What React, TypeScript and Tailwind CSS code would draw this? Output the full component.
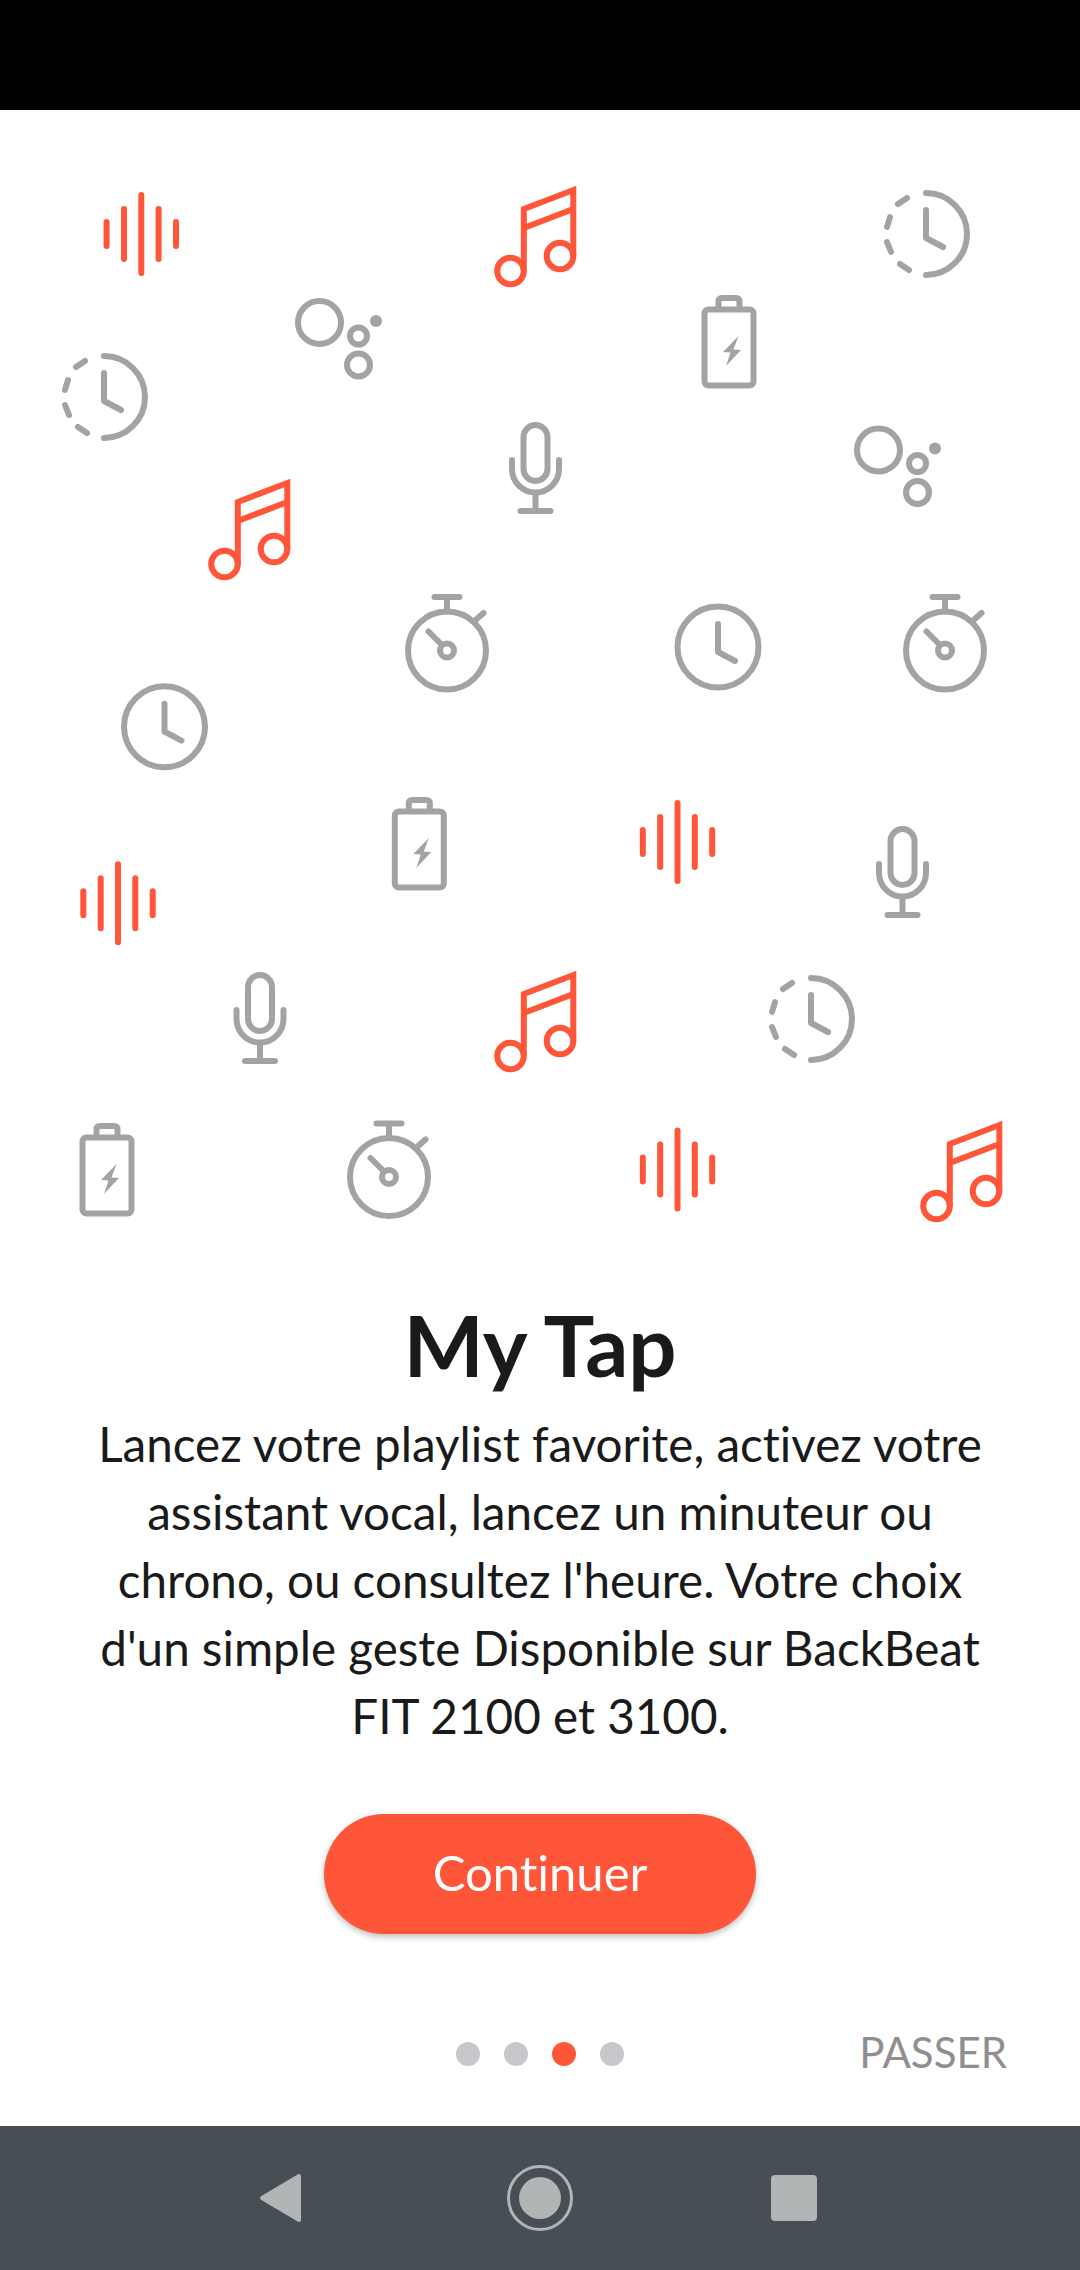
const RED = '#ff5639';
const GRAY = '#a3a3a3';

function Wave({ x, y }: { x: number; y: number }) {
  return (
    <g transform={`translate(${x} ${y})`} stroke={RED} strokeWidth={6} strokeLinecap="round" fill="none">
      <path d="M-34.7 -12V12M-17.3 -25V25M0 -39V39M17.3 -25V25M34.7 -12V12" />
    </g>
  );
}

function Music({ x, y }: { x: number; y: number }) {
  return (
    <g transform={`translate(${x} ${y})`} stroke={RED} strokeWidth={6} fill="none">
      <circle cx={16.5} cy={85} r={13.3} />
      <circle cx={66} cy={70} r={13.3} />
      <path d="M29.8 85V23L79.3 4V70" />
      <path d="M29.8 42L79.3 23" />
    </g>
  );
}

function DashClock({ x, y }: { x: number; y: number }) {
  return (
    <g transform={`translate(${x} ${y})`} stroke={GRAY} strokeWidth={6} strokeLinecap="round" strokeLinejoin="round" fill="none">
      <path d="M0 -41A41 41 0 0 1 0 41" />
      <path d="M-28 -30L-19 -36M-39 -7L-36 -17M-39 8L-35 18M-26 30L-17 36" />
      <path d="M0 -24V4L17 13" />
    </g>
  );
}

function Clock({ x, y }: { x: number; y: number }) {
  return (
    <g transform={`translate(${x} ${y})`} stroke={GRAY} strokeWidth={6} strokeLinecap="round" strokeLinejoin="round" fill="none">
      <circle r={40.5} />
      <path d="M0 -23V5L17 14" />
    </g>
  );
}

function Assistant({ x, y }: { x: number; y: number }) {
  return (
    <g transform={`translate(${x} ${y})`} stroke={GRAY} strokeWidth={6} fill="none">
      <circle r={21.5} />
      <circle cx={39} cy={13.5} r={8.5} />
      <circle cx={39} cy={42.5} r={11.5} />
      <circle cx={56.5} cy={-1.5} r={6} fill={GRAY} stroke="none" />
    </g>
  );
}

function Battery({ x, y }: { x: number; y: number }) {
  return (
    <g transform={`translate(${x} ${y})`}>
      <g stroke={GRAY} strokeWidth={6} fill="none" strokeLinejoin="round">
        <rect x={-24.5} y={14.5} width={49} height={76} rx={4} />
        <path d="M-10.5 14V6.5Q-10.5 3 -7 3H7Q10.5 3 10.5 6.5V14" />
      </g>
      <path d="M9.5 41L-6 57L1.5 57.5L-3 71L12 55L4.5 54.5Z" fill={GRAY} />
    </g>
  );
}

function Mic({ x, y }: { x: number; y: number }) {
  return (
    <g transform={`translate(${x} ${y})`} stroke={GRAY} strokeWidth={6} strokeLinecap="round" fill="none">
      <rect x={-12} y={4} width={24} height={56} rx={12} />
      <path d="M-23.5 39V48A23.5 23.5 0 0 0 23.5 48V39" />
      <path d="M0 72V90M-15 90H15" />
    </g>
  );
}

function Stopwatch({ x, y }: { x: number; y: number }) {
  return (
    <g transform={`translate(${x} ${y})`} stroke={GRAY} strokeWidth={6} strokeLinecap="round" fill="none">
      <circle r={39} />
      <circle r={7} />
      <path d="M-5 -5.5L-18.5 -19" />
      <path d="M0 -39V-53M-12.5 -53.5H12.5" />
      <path d="M28 -30L36.5 -37.5" />
    </g>
  );
}

function Illustration() {
  return (
    <svg viewBox="0 110 1080 1160" className="block w-[1080px] h-[1160px]">
      <Wave x={141.3} y={234} />
      <Music x={494} y={186} />
      <DashClock x={926} y={234} />
      <Assistant x={319.5} y={322.5} />
      <Battery x={729} y={295} />
      <DashClock x={104} y={397} />
      <Mic x={535.5} y={421} />
      <Assistant x={878.5} y={450} />
      <Music x={208} y={479} />
      <Stopwatch x={447} y={650.5} />
      <Clock x={718} y={647} />
      <Stopwatch x={945} y={650.5} />
      <Clock x={164.5} y={726.7} />
      <Battery x={419.3} y={797} />
      <Wave x={677.5} y={842} />
      <Mic x={902.5} y={825} />
      <Wave x={118} y={903.3} />
      <Mic x={260} y={971} />
      <Music x={494} y={971} />
      <DashClock x={811} y={1019} />
      <Battery x={107} y={1123} />
      <Stopwatch x={389} y={1177} />
      <Wave x={677.5} y={1169.5} />
      <Music x={920} y={1121} />
    </svg>
  );
}

export default function App() {
  return (
    <div className="w-[1080px] h-[2270px] flex flex-col bg-white font-['Lato',sans-serif] [font-variant-ligatures:none]">
      {/* Status bar */}
      <div className="h-[110px] bg-black" />

      <Illustration />

      {/* Copy */}
      <div className="flex flex-col items-center">
        <h1 className="mt-[29px] text-[85px] leading-[90px] font-bold text-[#1a1a1a]">My Tap</h1>
        <p className="w-[920px] mt-[21px] text-center text-[47.6px] leading-[68px] text-[#1a1a1a]">
          Lancez votre playlist favorite, activez votre assistant vocal, lancez un minuteur ou chrono, ou consultez l'heure. Votre choix d'un simple geste Disponible sur BackBeat FIT 2100 et 3100.
        </p>
        <button className="mt-[64px] w-[432px] h-[120px] pb-[3px] rounded-full bg-[#ff5539] text-white text-[49px] shadow-[0_3px_6px_rgba(0,0,0,0.25)]">
          Continuer
        </button>
      </div>

      {/* Pager */}
      <div className="mt-[95px] grid grid-cols-[1fr_auto_1fr] items-center">
        <div />
        <div className="flex gap-6">
          <div className="w-6 h-6 rounded-full bg-[#c7c7cc]" />
          <div className="w-6 h-6 rounded-full bg-[#c7c7cc]" />
          <div className="w-6 h-6 rounded-full bg-[#ff5539]" />
          <div className="w-6 h-6 rounded-full bg-[#c7c7cc]" />
        </div>
        <div className="pr-[73px] pb-[3px] text-right text-[42px] leading-[47px] text-[#8e8e93]">PASSER</div>
      </div>

      {/* Navigation bar */}
      <div className="mt-auto h-[144px] bg-[#474e54] flex items-center justify-center">
        <svg width="44" height="50" viewBox="0 0 44 50" className="mr-[204px] ml-[-4px]">
          <path d="M40 3L3 25L40 47Z" fill="#b0b5b5" stroke="#b0b5b5" strokeWidth="4" strokeLinejoin="round" />
        </svg>
        <div className="w-[66px] h-[66px] rounded-full border-[3px] border-[#b0b5b5] flex items-center justify-center">
          <div className="w-[42px] h-[42px] rounded-full bg-[#b0b5b5]" />
        </div>
        <div className="ml-[198px] w-[46px] h-[46px] rounded-[4px] bg-[#b0b5b5]" />
      </div>
    </div>
  );
}
